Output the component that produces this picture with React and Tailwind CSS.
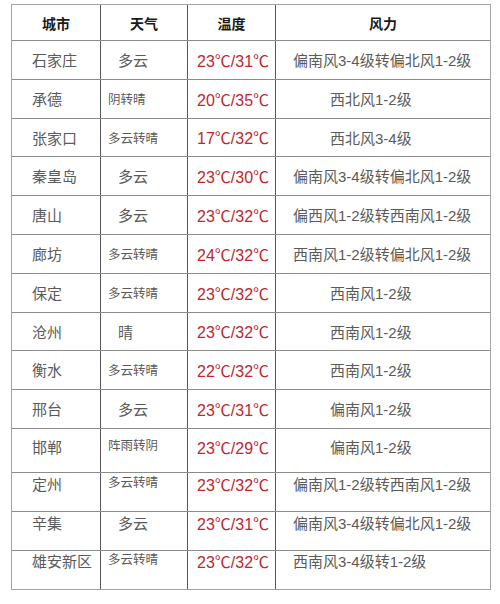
const rows = [
  { city: '石家庄', weather: '多云', temp: '23℃/31℃', wind: '偏南风3-4级转偏北风1-2级', h: 'h-[39px]' },
  { city: '承德', weather: '阴转晴', temp: '20℃/35℃', wind: '西北风1-2级', h: 'h-[39px]' },
  { city: '张家口', weather: '多云转晴', temp: '17℃/32℃', wind: '西北风3-4级', h: 'h-[38px]' },
  { city: '秦皇岛', weather: '多云', temp: '23℃/30℃', wind: '偏南风3-4级转偏北风1-2级', h: 'h-[39px]' },
  { city: '唐山', weather: '多云', temp: '23℃/32℃', wind: '偏西风1-2级转西南风1-2级', h: 'h-[39px]' },
  { city: '廊坊', weather: '多云转晴', temp: '24℃/32℃', wind: '西南风1-2级转偏北风1-2级', h: 'h-[39px]' },
  { city: '保定', weather: '多云转晴', temp: '23℃/32℃', wind: '西南风1-2级', h: 'h-[39px]' },
  { city: '沧州', weather: '晴', temp: '23℃/32℃', wind: '西南风1-2级', h: 'h-[38px]' },
  { city: '衡水', weather: '多云转晴', temp: '22℃/32℃', wind: '西南风1-2级', h: 'h-[39px]' },
  { city: '邢台', weather: '多云', temp: '23℃/31℃', wind: '偏南风1-2级', h: 'h-[39px]' },
  { city: '邯郸', weather: '阵雨转阴', temp: '23℃/29℃', wind: '偏南风1-2级', h: 'h-[44px]', align: 'items-start pt-[8px]' },
  { city: '定州', weather: '多云转晴', temp: '23℃/32℃', wind: '偏南风1-2级转西南风1-2级', h: 'h-[39px]', align: 'items-start pt-[1px]' },
  { city: '辛集', weather: '多云', temp: '23℃/31℃', wind: '偏南风3-4级转偏北风1-2级', h: 'h-[39px]', align: 'items-start pt-[1px]' },
  { city: '雄安新区', weather: '多云转晴', temp: '23℃/32℃', wind: '西南风3-4级转1-2级', h: 'h-[39px]', align: 'items-start pt-[0px]', windLeft: true },
];

const font = { fontFamily: '"Liberation Sans", "Noto Sans CJK SC", sans-serif' };

const Cell = ({ children, className = '' }) => (
  <div className={`flex ${className}`}>{children}</div>
);

export default function App() {
  return (
    <div className="w-[500px] h-[604px] bg-white pt-[4px] pl-[11px]" style={font}>
      <div className="w-[480px] border border-[#a3a3a3]">
        {/* header */}
        <div className="grid grid-cols-[88px_87px_88px_215px] h-[35px] text-[14px] font-bold text-[#1a1a1a]">
          <Cell className="items-center justify-center pt-[3px]">城市</Cell>
          <Cell className="items-center justify-center pt-[3px] border-l border-[#555]">天气</Cell>
          <Cell className="items-center justify-center pt-[3px] border-l border-[#555]">温度</Cell>
          <Cell className="items-center justify-center pt-[3px] border-l border-[#555]">风力</Cell>
        </div>

        {rows.map((r) => {
          const align = r.align || 'items-center pt-[3px]';
          const small = r.weather.length > 2;
          const longWind = r.wind.length > 8 || r.windLeft;
          return (
            <div
              key={r.city}
              className={`grid grid-cols-[88px_87px_88px_215px] border-t border-[#8c8c8c] ${r.h}`}
            >
              <Cell className={`${align} pl-[20px] text-[15px] text-[#5a5a5a]`}>{r.city}</Cell>
              <Cell
                className={`${align} border-l border-[#555] text-[#5a5a5a] ${
                  small ? 'pl-[7px] text-[12.5px]' : 'pl-[17px] text-[15px]'
                }`}
              >
                {r.weather}
              </Cell>
              <Cell className={`${align} border-l border-[#555] pl-[9px] text-[16px] text-[#c0262d]`}>{r.temp}</Cell>
              <Cell
                className={`${align} border-l border-[#555] text-[15px] text-[#5a5a5a] ${
                  longWind ? 'pl-[17px]' : 'pl-[54px]'
                }`}
              >
                {r.wind}
              </Cell>
            </div>
          );
        })}
      </div>
    </div>
  );
}
